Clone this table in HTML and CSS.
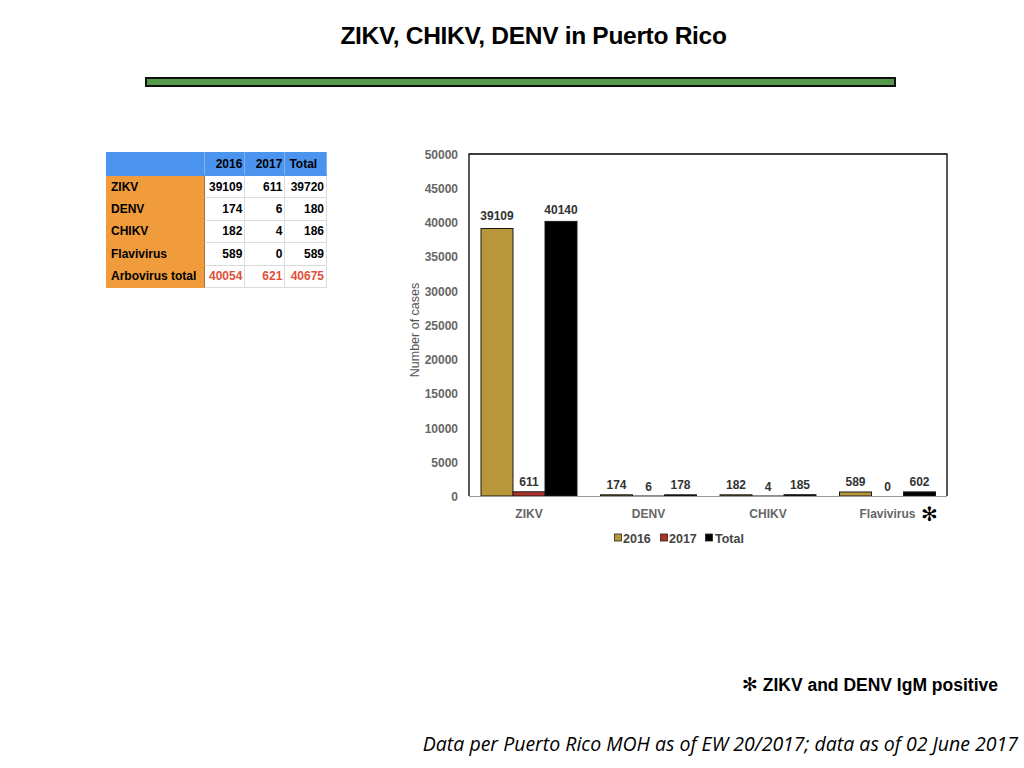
FILE: index.html
```html
<!DOCTYPE html>
<html>
<head>
<meta charset="utf-8">
<link rel="stylesheet" href="styles.css">
</head>
<body>
<div class="slide">
  <h1 class="title">ZIKV, CHIKV, DENV in Puerto Rico</h1>
  <div class="rule"></div>
  <div class="content">
    <table class="data">
      <thead>
        <tr><th class="lbl"></th><th>2016</th><th>2017</th><th class="tot">Total</th></tr>
      </thead>
      <tbody>
        <tr><td class="lbl">ZIKV</td><td>39109</td><td>611</td><td>39720</td></tr>
        <tr><td class="lbl">DENV</td><td>174</td><td>6</td><td>180</td></tr>
        <tr><td class="lbl">CHIKV</td><td>182</td><td>4</td><td>186</td></tr>
        <tr><td class="lbl">Flavivirus</td><td>589</td><td>0</td><td>589</td></tr>
        <tr class="sum"><td class="lbl">Arbovirus total</td><td>40054</td><td>621</td><td>40675</td></tr>
      </tbody>
    </table>
    <svg class="chart" width="560" height="410" viewBox="0 0 560 410">
      <!-- y tick labels -->
      <g class="tick">
        <text x="58" y="18">50000</text>
        <text x="58" y="52">45000</text>
        <text x="58" y="86">40000</text>
        <text x="58" y="120">35000</text>
        <text x="58" y="155">30000</text>
        <text x="58" y="189">25000</text>
        <text x="58" y="223">20000</text>
        <text x="58" y="257">15000</text>
        <text x="58" y="292">10000</text>
        <text x="58" y="326">5000</text>
        <text x="58" y="360">0</text>
      </g>
      <text class="ytitle" transform="translate(19 189) rotate(-90)">Number of cases</text>
      <!-- plot frame -->
      <path class="frame" d="M69 355 V13 H547 V355"/>
      <!-- bars -->
      <g class="bars">
        <rect class="b16" x="81" y="87.5" width="32" height="267.5"/>
        <rect class="b17" x="113" y="350.8" width="32" height="4.2"/>
        <rect class="btot" x="145" y="80.4" width="32" height="274.6"/>

        <rect class="b16" x="200.5" y="353.8" width="32" height="1.2"/>
        <rect class="b17" x="232.5" y="355" width="32" height="0.1"/>
        <rect class="btot" x="264.5" y="353.8" width="32" height="1.2"/>

        <rect class="b16" x="320" y="353.8" width="32" height="1.2"/>
        <rect class="b17" x="352" y="355" width="32" height="0.1"/>
        <rect class="btot" x="384" y="353.7" width="32" height="1.3"/>

        <rect class="b16" x="439.5" y="351" width="32" height="4"/>
        <rect class="btot" x="503.5" y="350.9" width="32" height="4.1"/>
      </g>
      <line class="axis" x1="69" y1="355.5" x2="547" y2="355.5"/>
      <!-- value labels -->
      <g class="val">
        <text x="97" y="79">39109</text>
        <text x="129" y="345">611</text>
        <text x="161" y="73">40140</text>
        <text x="216.5" y="348">174</text>
        <text x="248.5" y="350">6</text>
        <text x="280.5" y="348">178</text>
        <text x="336" y="348">182</text>
        <text x="368" y="350">4</text>
        <text x="400" y="348">185</text>
        <text x="455.5" y="345">589</text>
        <text x="487.5" y="350">0</text>
        <text x="519.5" y="345">602</text>
      </g>
      <!-- categories -->
      <g class="cat">
        <text x="129" y="377">ZIKV</text>
        <text x="248.5" y="377">DENV</text>
        <text x="368" y="377">CHIKV</text>
        <text x="487.5" y="377">Flavivirus</text>
      </g>
      <text class="star" x="521" y="380">✻</text>
      <!-- legend -->
      <g class="legend">
        <rect class="b16" x="214.5" y="393" width="7" height="7"/>
        <text x="223" y="401.5">2016</text>
        <rect class="b17" x="260.5" y="393" width="7" height="7"/>
        <text x="269" y="401.5">2017</text>
        <rect class="btot" x="305.5" y="393" width="7" height="7"/>
        <text x="315" y="401.5">Total</text>
      </g>
    </svg>
  </div>
  <p class="note"><span class="ast">✻</span> ZIKV and DENV IgM positive</p>
  <p class="source">Data per Puerto Rico MOH as of EW 20/2017; data as of 02 June 2017</p>
</div>
</body>
</html>
```

FILE: styles.css
```css
html, body {
  margin: 0;
  padding: 0;
  background: #ffffff;
}

.slide {
  width: 1024px;
  height: 768px;
  font-family: "Liberation Sans", Arial, sans-serif;
  color: #000;
  display: flex;
  flex-direction: column;
}

.title {
  margin: 22px 0 0 0;
  padding-left: 43px;
  font-size: 24.5px;
  line-height: 28px;
  font-weight: bold;
  text-align: center;
  letter-spacing: -0.3px;
}

.rule {
  margin: 27px 0 0 145px;
  width: 747px;
  height: 6px;
  background: #55994a;
  border: 2px solid #111;
}

.content {
  display: flex;
  align-items: flex-start;
  margin-top: 54px;
  padding-left: 106px;
  gap: 73px;
}

.data {
  margin-top: 11px;
  border-collapse: collapse;
  font-size: 12px;
  font-weight: bold;
  width: 221px;
}

.data th,
.data td {
  height: 22.4px;
  padding: 0 2px 0 4px;
  border: 1px solid #dcdcdc;
  text-align: right;
  box-sizing: border-box;
  white-space: nowrap;
}

.data thead th {
  background: #4a93ee;
  height: 23px;
  border-color: #4a93ee;
  border-right-color: #7fb0f0;
  color: #000;
}

.data thead th.tot {
  text-align: left;
}

.data th.lbl,
.data td.lbl {
  width: 98px;
  text-align: left;
}

.data td.lbl {
  background: #f09c3c;
  border-color: #f09c3c;
  border-right-color: #a07040;
}

.data td:nth-child(2) { width: 39px; }
.data td:nth-child(3) { width: 40px; }

.data tr.sum td { color: #e0503a; }
.data tr.sum td.lbl { color: #000; }

.chart {
  display: block;
  font-family: "Liberation Sans", Arial, sans-serif;
}

.tick text {
  font-size: 12px;
  font-weight: bold;
  fill: #666;
  text-anchor: end;
}

.ytitle {
  font-size: 12.5px;
  fill: #555;
  text-anchor: middle;
}

.frame {
  fill: none;
  stroke: #000;
  stroke-width: 1.3;
}

.axis {
  stroke: #999;
  stroke-width: 1.2;
}

.bars rect {
  stroke: #1a1a1a;
  stroke-width: 1;
}

.b16 { fill: #b8963a; }
.b17 { fill: #b1312a; }
.btot { fill: #000; }

.val text {
  font-size: 12px;
  font-weight: bold;
  fill: #333;
  text-anchor: middle;
}

.cat text {
  font-size: 12px;
  font-weight: bold;
  fill: #666;
  text-anchor: middle;
}

.star {
  font-family: "DejaVu Sans", sans-serif;
  font-size: 20px;
  font-weight: bold;
  fill: #000;
}

.legend text {
  font-size: 12.5px;
  font-weight: bold;
  fill: #444;
}

.legend rect {
  stroke: #222;
  stroke-width: 0.8;
}

.note {
  margin: 122px 26px 0 0;
  text-align: right;
  font-size: 17.5px;
  font-weight: bold;
  line-height: 22px;
}

.note .ast {
  font-family: "DejaVu Sans", sans-serif;
  font-size: 19px;
}

.source {
  margin: 36px 6px 0 0;
  text-align: right;
  font-family: "Open Sans", "DejaVu Sans", sans-serif;
  font-style: italic;
  font-size: 19.5px;
  line-height: 24px;
  color: #000;
}
```
